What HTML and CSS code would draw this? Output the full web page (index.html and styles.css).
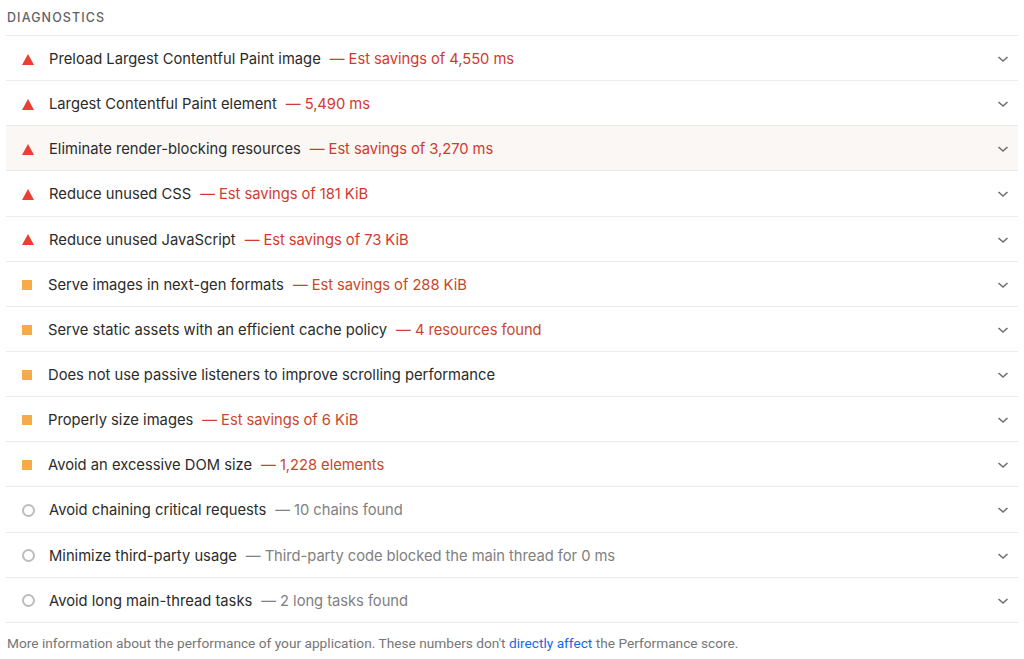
FILE: index.html
```html
<html>
  <head>
    <meta http-equiv="Content-Type" content="text/html; charset=UTF-8" />
    <title>Diagnostics</title>
    <link rel="stylesheet" href="styles.css">
  </head>
  <body>
  <div class="group">
    <h2 class="group-title">Diagnostics</h2>

    <ul class="audits">
      <li class="audit fail">
        <span class="icon"></span>
        <span class="title">Preload Largest Contentful Paint image</span>
        <span class="value">&mdash; Est savings of 4,550 ms</span>
        <span class="chevron"><svg width="12" height="8" viewBox="0 0 12 8"><path d="M1.5 2 L6 6 L10.5 2" fill="none" stroke="#707070" stroke-width="1.6"/></svg></span>
      </li>
      <li class="audit fail">
        <span class="icon"></span>
        <span class="title">Largest Contentful Paint element</span>
        <span class="value">&mdash; 5,490 ms</span>
        <span class="chevron"><svg width="12" height="8" viewBox="0 0 12 8"><path d="M1.5 2 L6 6 L10.5 2" fill="none" stroke="#707070" stroke-width="1.6"/></svg></span>
      </li>
      <li class="audit fail hover">
        <span class="icon"></span>
        <span class="title">Eliminate render-blocking resources</span>
        <span class="value">&mdash; Est savings of 3,270 ms</span>
        <span class="chevron"><svg width="12" height="8" viewBox="0 0 12 8"><path d="M1.5 2 L6 6 L10.5 2" fill="none" stroke="#707070" stroke-width="1.6"/></svg></span>
      </li>
      <li class="audit fail">
        <span class="icon"></span>
        <span class="title">Reduce unused CSS</span>
        <span class="value">&mdash; Est savings of 181 KiB</span>
        <span class="chevron"><svg width="12" height="8" viewBox="0 0 12 8"><path d="M1.5 2 L6 6 L10.5 2" fill="none" stroke="#707070" stroke-width="1.6"/></svg></span>
      </li>
      <li class="audit fail">
        <span class="icon"></span>
        <span class="title">Reduce unused JavaScript</span>
        <span class="value">&mdash; Est savings of 73 KiB</span>
        <span class="chevron"><svg width="12" height="8" viewBox="0 0 12 8"><path d="M1.5 2 L6 6 L10.5 2" fill="none" stroke="#707070" stroke-width="1.6"/></svg></span>
      </li>
      <li class="audit average">
        <span class="icon"></span>
        <span class="title">Serve images in next-gen formats</span>
        <span class="value">&mdash; Est savings of 288 KiB</span>
        <span class="chevron"><svg width="12" height="8" viewBox="0 0 12 8"><path d="M1.5 2 L6 6 L10.5 2" fill="none" stroke="#707070" stroke-width="1.6"/></svg></span>
      </li>
      <li class="audit average">
        <span class="icon"></span>
        <span class="title">Serve static assets with an efficient cache policy</span>
        <span class="value">&mdash; 4 resources found</span>
        <span class="chevron"><svg width="12" height="8" viewBox="0 0 12 8"><path d="M1.5 2 L6 6 L10.5 2" fill="none" stroke="#707070" stroke-width="1.6"/></svg></span>
      </li>
      <li class="audit average">
        <span class="icon"></span>
        <span class="title">Does not use passive listeners to improve scrolling performance</span>
        <span class="chevron"><svg width="12" height="8" viewBox="0 0 12 8"><path d="M1.5 2 L6 6 L10.5 2" fill="none" stroke="#707070" stroke-width="1.6"/></svg></span>
      </li>
      <li class="audit average">
        <span class="icon"></span>
        <span class="title">Properly size images</span>
        <span class="value">&mdash; Est savings of 6 KiB</span>
        <span class="chevron"><svg width="12" height="8" viewBox="0 0 12 8"><path d="M1.5 2 L6 6 L10.5 2" fill="none" stroke="#707070" stroke-width="1.6"/></svg></span>
      </li>
      <li class="audit average">
        <span class="icon"></span>
        <span class="title">Avoid an excessive DOM size</span>
        <span class="value">&mdash; 1,228 elements</span>
        <span class="chevron"><svg width="12" height="8" viewBox="0 0 12 8"><path d="M1.5 2 L6 6 L10.5 2" fill="none" stroke="#707070" stroke-width="1.6"/></svg></span>
      </li>
      <li class="audit info">
        <span class="icon"></span>
        <span class="title">Avoid chaining critical requests</span>
        <span class="value">&mdash; 10 chains found</span>
        <span class="chevron"><svg width="12" height="8" viewBox="0 0 12 8"><path d="M1.5 2 L6 6 L10.5 2" fill="none" stroke="#707070" stroke-width="1.6"/></svg></span>
      </li>
      <li class="audit info">
        <span class="icon"></span>
        <span class="title">Minimize third-party usage</span>
        <span class="value">&mdash; Third-party code blocked the main thread for 0 ms</span>
        <span class="chevron"><svg width="12" height="8" viewBox="0 0 12 8"><path d="M1.5 2 L6 6 L10.5 2" fill="none" stroke="#707070" stroke-width="1.6"/></svg></span>
      </li>
      <li class="audit info">
        <span class="icon"></span>
        <span class="title">Avoid long main-thread tasks</span>
        <span class="value">&mdash; 2 long tasks found</span>
        <span class="chevron"><svg width="12" height="8" viewBox="0 0 12 8"><path d="M1.5 2 L6 6 L10.5 2" fill="none" stroke="#707070" stroke-width="1.6"/></svg></span>
      </li>
    </ul>

    <p class="footer">More information about the performance of your application. These numbers don't <a href="#">directly affect</a> the Performance score.</p>
  </div>
  </body>
</html>
```

FILE: styles.css
```css
body {
  margin: 0;
  font-family: Inter, "Noto Sans", sans-serif;
  color: #212121;
  background: #fff;
}
.group {
  padding: 0 6px;
}
.group-title {
  margin: 0;
  padding: 10px 1px 0;
  height: 25px;
  font-size: 12.5px;
  font-weight: 500;
  letter-spacing: 1.1px;
  text-transform: uppercase;
  color: #5f6368;
}
.audits {
  list-style: none;
  margin: 0;
  padding: 0;
  border-top: 1px solid #ebebeb;
}
.audit {
  display: flex;
  align-items: center;
  height: 42.15px;
  padding-top: 2px;
  border-bottom: 1px solid #ebebeb;
  font-size: 14.75px;
}
.audit.hover {
  background: #faf7f5;
}
.icon {
  width: 12px;
  height: 12px;
  margin: 0 15px 0 16px;
  flex: none;
}
.fail .icon {
  width: 0;
  height: 0;
  border-left: 6px solid transparent;
  border-right: 6px solid transparent;
  border-bottom: 11px solid #eb3f33;
}
.average .icon {
  width: 10px;
  height: 10px;
  margin: 0 16px 0 16px;
  background: #f6ab48;
}
.info .icon {
  box-sizing: border-box;
  width: 13px;
  height: 13px;
  margin: 0 14px 0 16px;
  border: 2px solid #bdbdbd;
  border-radius: 50%;
}
.title {
  color: #2b2b2b;
}
.value {
  margin-left: 9px;
  color: #d2392f;
  letter-spacing: -0.05px;
}
.average .value {
  color: #c8472c;
}
.info .value {
  color: #808080;
}
.chevron {
  margin-left: auto;
  margin-right: 9px;
  display: flex;
}
p.footer {
  margin: 12px 1px 0;
  font-family: Roboto, sans-serif;
  font-size: 13.7px;
  color: #767676;
}
a, a:visited {
  color: #1a66e8;
  text-decoration: none;
}
```
